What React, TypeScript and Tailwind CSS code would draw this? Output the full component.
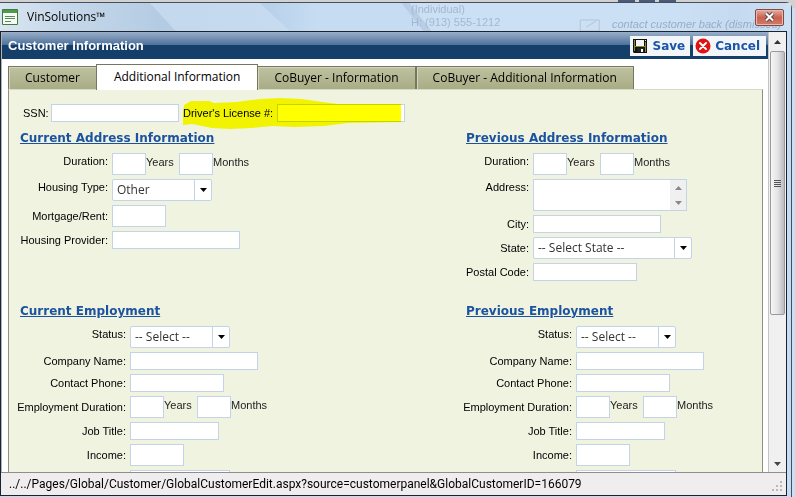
import type { ReactNode } from 'react';

const segoe = "font-['Open_Sans','Noto_Sans',sans-serif]";
const arial = "font-['Liberation_Sans',Arial,sans-serif]";
const verdana = "font-['DejaVu_Sans',Verdana,sans-serif]";

function TextField({ id, className, label }: { id: string; className: string; label?: string }) {
  return (
    <input
      id={id}
      type="text"
      aria-label={label}
      className={`block shrink-0 border border-[#c3d3e8] bg-white px-1 text-[11px] outline-none ${className}`}
    />
  );
}

function SelectField({ id, value, className, label }: { id: string; value: string; className: string; label?: string }) {
  return (
    <div className={`relative h-[22px] shrink-0 ${className}`}>
      <select
        id={id}
        aria-label={label}
        className={`block h-full w-full appearance-none rounded-xs border border-[#c3d3e8] bg-white pl-1 pr-5 text-[12px] leading-5 text-[#333] outline-none ${segoe}`}
      >
        <option>{value}</option>
      </select>
      <span className="pointer-events-none absolute inset-y-0 right-0 flex w-[18px] items-center justify-center border-l border-[#c3d3e8]">
        <svg width="7" height="4" viewBox="0 0 7 4" aria-hidden="true">
          <path d="M0 0h7L3.500 4z" fill="#000" />
        </svg>
      </span>
    </div>
  );
}

function Row({ id, label, labelWidth, high, children }: { id: string; label: string; labelWidth: string; high?: boolean; children: ReactNode }) {
  return (
    <div className={`flex gap-1 ${high ? 'items-start' : 'items-center'}`}>
      <label htmlFor={id} className={`flex shrink-0 justify-end whitespace-nowrap text-[11px] leading-4 ${labelWidth}`}>
        {label}
      </label>
      {children}
    </div>
  );
}

function Duration({ id }: { id: string }) {
  return (
    <div className="flex items-start text-[11px] leading-[18px] text-[#222]">
      <TextField id={id} className="h-[22px] w-[34px]" />
      <label htmlFor={id} className="w-[33px]">Years</label>
      <TextField id={`${id}-months`} className="h-[22px] w-[34px]" />
      <label htmlFor={`${id}-months`}>Months</label>
    </div>
  );
}

function Section({ title, children }: { title: string; children: ReactNode }) {
  return (
    <section className="min-w-0">
      <h2 className={`mb-[7px] whitespace-nowrap text-[12px] font-bold leading-[15px] text-[#1c53a0] ${verdana}`}>
        <a href="#" className="underline">{title}</a>
      </h2>
      <div className="flex flex-col gap-1">{children}</div>
    </section>
  );
}

function Employment({ title, prefix }: { title: string; prefix: string }) {
  const w = 'w-[106px]';
  return (
    <Section title={title}>
      <Row id={`${prefix}-status`} label="Status:" labelWidth={w} high>
        <SelectField id={`${prefix}-status`} value="-- Select --" className="w-[100px]" />
      </Row>
      <Row id={`${prefix}-company`} label="Company Name:" labelWidth={w}>
        <TextField id={`${prefix}-company`} className="h-[18px] w-[128px]" />
      </Row>
      <Row id={`${prefix}-phone`} label="Contact Phone:" labelWidth={w}>
        <TextField id={`${prefix}-phone`} className="h-[18px] w-[94px]" />
      </Row>
      <Row id={`${prefix}-duration`} label="Employment Duration:" labelWidth={w}>
        <Duration id={`${prefix}-duration`} />
      </Row>
      <Row id={`${prefix}-job`} label="Job Title:" labelWidth={w}>
        <TextField id={`${prefix}-job`} className="h-[18px] w-[89px]" />
      </Row>
      <Row id={`${prefix}-income`} label="Income:" labelWidth={w}>
        <TextField id={`${prefix}-income`} className="h-[22px] w-[54px]" />
      </Row>
      <div className="pl-[110px]">
        <TextField id={`${prefix}-interval`} className="h-[22px] w-[100px]" label="Income interval" />
      </div>
    </Section>
  );
}

function Tab({ children, active }: { children: ReactNode; active?: boolean }) {
  return (
    <button
      type="button"
      role="tab"
      aria-selected={!!active}
      className={
        active
          ? 'z-10 -mx-px h-[26px] border border-b-0 border-[#77775f] bg-white px-[17px] pb-px'
          : 'h-6 border border-[#77775f] bg-linear-to-b from-[#bfc1a0] to-[#a9ad85] px-4 shadow-[inset_1px_1px_0_#d2d4bb]'
      }
    >
      {children}
    </button>
  );
}

function FloppyIcon() {
  return (
    <svg width="14" height="14" viewBox="0 0 14 14" aria-hidden="true">
      <path d="M0 0h14v14H1L0 13z" fill="#111" />
      <path d="M1 1h1v11H1zM12 3h1v10h-1zM2 7h10v1H2z" fill="#8a8a2c" />
      <path d="M3 1h8v6H3z" fill="#f4f4f4" />
      <path d="M12 1h1v1h-1z" fill="#eee" />
      <path d="M4 9h7v4H4z" fill="#222" />
      <path d="M8 10h2v3H8z" fill="#fff" />
    </svg>
  );
}

function CancelIcon() {
  return (
    <svg width="16" height="16" viewBox="0 0 16 16" aria-hidden="true">
      <circle cx="8" cy="8" r="7.500" fill="#e01212" />
      <path d="M5 5l6 6M11 5l-6 6" stroke="#fff" strokeWidth="2" strokeLinecap="round" />
    </svg>
  );
}

function Arrow({ up, color }: { up?: boolean; color: string }) {
  return (
    <svg width="7" height="4" viewBox="0 0 7 4" aria-hidden="true">
      <path d={up ? 'M0 4h7L3.500 0z' : 'M0 0h7L3.500 4z'} fill={color} />
    </svg>
  );
}

function TitleBar() {
  return (
    <header className={`relative flex h-[28px] shrink-0 items-center overflow-hidden pl-[2px] pr-[7px] ${segoe}`}>
      <svg className="absolute inset-0 h-full w-full" viewBox="0 0 792 28" preserveAspectRatio="none" aria-hidden="true">
        <defs>
          <linearGradient id="glass" x1="0" x2="1" y1="0" y2="0">
            <stop offset="0" stopColor="#d9e5f0" />
            <stop offset="0.080" stopColor="#c6d8ea" />
            <stop offset="0.200" stopColor="#b4cce3" />
            <stop offset="0.340" stopColor="#b8d1ea" />
            <stop offset="0.400" stopColor="#c6dcf2" />
            <stop offset="0.850" stopColor="#c6dcf2" />
            <stop offset="0.930" stopColor="#b6cee6" />
            <stop offset="1" stopColor="#c6dcf0" />
          </linearGradient>
        </defs>
        <rect width="792" height="28" fill="url(#glass)" />
        <path d="M150 0h110l30 28H176z" fill="#cfe1f3" opacity="0.600" />
        <path d="M402 0h390v28H424z" fill="#d2e4f7" opacity="0.550" />
        <path d="M402 0h8l22 28h-8z" fill="#8fadcb" opacity="0.350" />
        <path d="M581 17h19v11h-19zM587 24l10-6" fill="none" stroke="#b2c4d6" />
      </svg>
      <div aria-hidden="true" className={`absolute left-[411px] top-0 text-[11px] leading-[13px] text-[#a3b8cd] ${arial}`}>
        <p>(Individual)</p>
        <p>H: (913) 555-1212</p>
      </div>
      <p aria-hidden="true" className={`absolute left-[612px] top-[14px] whitespace-nowrap text-[11px] italic leading-[14px] text-[#97adc6] ${arial}`}>
        contact customer back (dismissed)
      </p>
      <svg className="relative" width="16" height="16" viewBox="0 0 16 16" aria-hidden="true">
        <path d="M.5.500h15v15H.500z" fill="#f6fbf4" stroke="#3f7a41" />
        <path d="M1 1h14v3H1z" fill="#4d9b4c" />
        <path d="M3 7.500h10M3 9.500h10M3 12.500h6" stroke="#5b8a5b" />
      </svg>
      <h1 className="relative ml-[9px] text-[12px] leading-4 text-black">VinSolutions™</h1>
      <button
        type="button"
        aria-label="Close"
        className="relative ml-auto flex h-[17px] w-[29px] items-center justify-center rounded-xs border border-[#7c4a48] bg-linear-to-b from-[#e3aa9f] via-[#cb6150] to-[#d17a68] shadow-[inset_0_0_0_1px_#e9b8ae]"
      >
        <svg width="11" height="10" viewBox="0 0 11 10" aria-hidden="true">
          <path d="M2 1.500l7 7M9 1.500l-7 7" stroke="#5a4a50" strokeWidth="4" />
          <path d="M2 1.500l7 7M9 1.500l-7 7" stroke="#fff" strokeWidth="2" />
        </svg>
      </button>
    </header>
  );
}

export default function App() {
  return (
    <div className={`flex h-screen flex-col overflow-hidden bg-[#c9dff4] text-black ${arial}`}>
      <div className="h-2 shrink-0 -mb-[6px] bg-[#d3d1cf]">
        <div aria-hidden="true" className="ml-auto mr-[119px] flex h-[2px] w-[58px] gap-1">
          <span className="flex-1 bg-[#4c5a78]" />
          <span className="flex-1 bg-[#4c5a78]" />
          <span className="flex-1 bg-[#4c5a78]" />
        </div>
      </div>
      <div className="relative mr-[3px] flex min-h-0 flex-1 flex-col rounded-tr-md border-r border-t border-[#44505e] bg-[#c5dcf2]">
        <TitleBar />
        <div className="mr-1 flex min-h-0 flex-1 flex-col border border-[#1a2430] bg-white">
          <div className="flex min-h-0 flex-1">
            <main className="flex min-w-0 flex-1 flex-col overflow-hidden border-l border-[#aeb4ba]">
              <div className="flex h-[27px] shrink-0 items-center bg-linear-to-b from-[#9aafc9] from-0% via-[#4b6e99] via-50% to-[#143f6b] to-50% pl-[6px] pr-[2px]">
                <h2 className="text-[13px] font-bold leading-4 text-white">Customer Information</h2>
                <div className={`ml-auto flex gap-[3px] text-[12px] font-bold leading-4 text-[#1a55a8] ${verdana}`}>
                  <button type="button" className="flex h-5 items-center gap-[5px] bg-[#f3f6f9] px-[3px] pr-[5px]">
                    <FloppyIcon />
                    Save
                  </button>
                  <button type="button" className="flex h-5 items-center gap-1 bg-[#f3f6f9] pl-[2px] pr-[6px]">
                    <CancelIcon />
                    Cancel
                  </button>
                </div>
              </div>
              <div className="flex min-h-0 flex-1 flex-col pl-[6px] pr-[5px] pt-[5px]">
                <div role="tablist" className={`-mb-px flex shrink-0 items-end whitespace-nowrap text-[12px] leading-4 ${segoe}`}>
                  <Tab>Customer</Tab>
                  <Tab active>Additional Information</Tab>
                  <Tab>CoBuyer - Information</Tab>
                  <Tab>CoBuyer - Additional Information</Tab>
                </div>
                <form className="min-h-0 flex-1 overflow-hidden border-x border-t border-x-[#8f8f86] border-t-[#d8dac6] bg-[#f1f3e1] pl-[11px] pt-[14px]">
                  <div className="flex items-center pl-[3px] text-[11px] leading-4">
                    <label htmlFor="ssn" className="w-7">SSN:</label>
                    <TextField id="ssn" className="h-[18px] w-[128px]" />
                    <div className="relative ml-1 flex items-center">
                      <label htmlFor="license" className="w-[94px]">Driver's License #:</label>
                      <TextField id="license" className="h-[18px] w-[128px]" />
                      <svg
                        className="pointer-events-none absolute -top-[7px] left-0 mix-blend-multiply"
                        width="222"
                        height="32"
                        viewBox="0 0 222 32"
                        aria-hidden="true"
                      >
                        <path
                          d="M1 8L8 4h18l5 2 22-1 24-3 20-1 22 1 20 3 16 2h63v18l-53 1-24 3-30 1-22-1-20 2-22 1-18-1-20-4-10 1z"
                          fill="#ffff00"
                        />
                      </svg>
                    </div>
                  </div>
                  <div className="mt-[9px] grid grid-cols-[446px_1fr] gap-y-[23px]">
                    <Section title="Current Address Information">
                      <Row id="cur-duration" label="Duration:" labelWidth="w-[88px]" high>
                        <Duration id="cur-duration" />
                      </Row>
                      <Row id="housing-type" label="Housing Type:" labelWidth="w-[88px]" high>
                        <SelectField id="housing-type" value="Other" className="w-[100px]" />
                      </Row>
                      <Row id="rent" label="Mortgage/Rent:" labelWidth="w-[88px]">
                        <TextField id="rent" className="h-[22px] w-[54px]" />
                      </Row>
                      <Row id="provider" label="Housing Provider:" labelWidth="w-[88px]">
                        <TextField id="provider" className="h-[18px] w-[128px]" />
                      </Row>
                    </Section>
                    <Section title="Previous Address Information">
                      <Row id="prev-duration" label="Duration:" labelWidth="w-[63px]" high>
                        <Duration id="prev-duration" />
                      </Row>
                      <Row id="address" label="Address:" labelWidth="w-[63px]" high>
                        <div className="flex h-8 w-[154px] border border-[#c3d3e8] bg-white">
                          <textarea id="address" className="h-full min-w-0 flex-1 resize-none overflow-hidden px-1 text-[11px] outline-none" />
                          <div className="flex w-4 flex-col items-center justify-around bg-[#f0f0f0]">
                            <Arrow up color="#8a8a8a" />
                            <Arrow color="#8a8a8a" />
                          </div>
                        </div>
                      </Row>
                      <Row id="city" label="City:" labelWidth="w-[63px]">
                        <TextField id="city" className="h-[18px] w-[128px]" />
                      </Row>
                      <Row id="state" label="State:" labelWidth="w-[63px]">
                        <SelectField id="state" value="-- Select State --" className="w-[159px]" />
                      </Row>
                      <Row id="postal" label="Postal Code:" labelWidth="w-[63px]">
                        <TextField id="postal" className="h-[18px] w-[104px]" />
                      </Row>
                    </Section>
                    <Employment title="Current Employment" prefix="cur" />
                    <Employment title="Previous Employment" prefix="prev" />
                  </div>
                </form>
              </div>
            </main>
            <div aria-hidden="true" className="flex w-[18px] shrink-0 flex-col items-center border-l border-[#c4c4c4] bg-[#f0f0f0]">
              <div className="flex h-[19px] shrink-0 items-center">
                <Arrow up color="#333" />
              </div>
              <div className="flex w-[15px] flex-[3] flex-col items-center justify-center gap-px rounded-xs border border-[#9a9a9a] bg-linear-to-r from-[#f5f5f5] via-[#e4e4e6] to-[#bdbdc2]">
                <span className="h-px w-[7px] bg-[#555]" />
                <span className="h-px w-[7px] bg-[#555]" />
                <span className="h-px w-[7px] bg-[#555]" />
                <span className="h-px w-[7px] bg-[#555]" />
              </div>
              <div className="flex-[1.600]" />
              <div className="flex h-[17px] shrink-0 items-center">
                <Arrow color="#444" />
              </div>
            </div>
          </div>
          <footer className={`flex h-[23px] shrink-0 items-center justify-between border-t border-[#8f8d8e] bg-[#f0edee] pl-2 pr-1 text-[12px] leading-4 font-['Roboto',sans-serif]`}>
            <p className="whitespace-nowrap">../../Pages/Global/Customer/GlobalCustomerEdit.aspx?source=customerpanel&amp;GlobalCustomerID=166079</p>
            <svg width="10" height="10" viewBox="0 0 10 10" aria-hidden="true" className="mt-1">
              <path d="M8 0h2v2H8zM4 4h2v2H4zM8 4h2v2H8zM0 8h2v2H0zM4 8h2v2H4zM8 8h2v2H8z" fill="#bdb9ba" />
            </svg>
          </footer>
        </div>
        <div className="h-px shrink-0" />
      </div>
    </div>
  );
}
